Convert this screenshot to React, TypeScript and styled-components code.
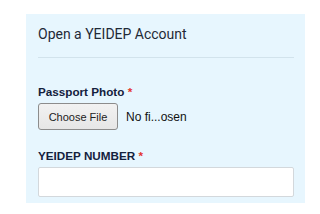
import styled, { createGlobalStyle } from "styled-components";
import React from "react";

const GlobalStyle = createGlobalStyle`
  html, body {
    margin: 0;
    padding: 0;
    background: #ffffff;
  }
  body {
    font-family: Roboto, "Noto Sans", Arial, sans-serif;
  }
`;

const Page = styled.div`
  width: 320px;
  height: 214px;
  padding: 14px 15px 0 26px;
  box-sizing: border-box;
`;

const Card = styled.div`
  background: #e7f6fe;
  height: 189px;
  padding: 0 11px 0 12px;
  box-sizing: border-box;
  display: flex;
  flex-direction: column;
`;

const Heading = styled.h2`
  margin: 0;
  padding: 12px 0 15px;
  font-size: 14px;
  font-weight: 400;
  color: #1f2a37;
  border-bottom: 1px solid #d2e3ec;
`;

const Field = styled.div<{ top: number }>`
  display: flex;
  flex-direction: column;
  margin-top: ${({ top }) => top}px;
`;

const Label = styled.label`
  font-family: "Liberation Sans", Arial, sans-serif;
  font-size: 11.7px;
  font-weight: 700;
  color: #14213d;
  line-height: 14px;
`;

const Star = styled.span`
  color: #e3342f;
`;

const FileRow = styled.div`
  display: flex;
  align-items: center;
  gap: 8px;
  margin-top: 4px;
`;

const FileButton = styled.button`
  width: 80px;
  height: 27px;
  font-family: "Liberation Sans", Arial, sans-serif;
  font-size: 11px;
  color: #222;
  background: linear-gradient(#f2f2f2, #e6e6e6);
  border: 1px solid #8c8c8c;
  border-radius: 3px;
  padding: 0;
`;

const FileName = styled.span`
  font-family: "Liberation Sans", Arial, sans-serif;
  font-size: 12px;
  color: #111;
`;

const TextInput = styled.input`
  margin-top: 4px;
  height: 30px;
  box-sizing: border-box;
  border: 1px solid #d3d8dc;
  border-radius: 2px;
  background: #fff;
`;

function App() {
  return (
    <Page>
      <GlobalStyle />
      <Card>
        <Heading>Open a YEIDEP Account</Heading>
        <Field top={27}>
          <Label>
            Passport Photo <Star>*</Star>
          </Label>
          <FileRow>
            <FileButton type="button">Choose File</FileButton>
            <FileName>No fi...osen</FileName>
          </FileRow>
        </Field>
        <Field top={19}>
          <Label>
            YEIDEP NUMBER <Star>*</Star>
          </Label>
          <TextInput type="text" />
        </Field>
      </Card>
    </Page>
  );
}

export default App;
